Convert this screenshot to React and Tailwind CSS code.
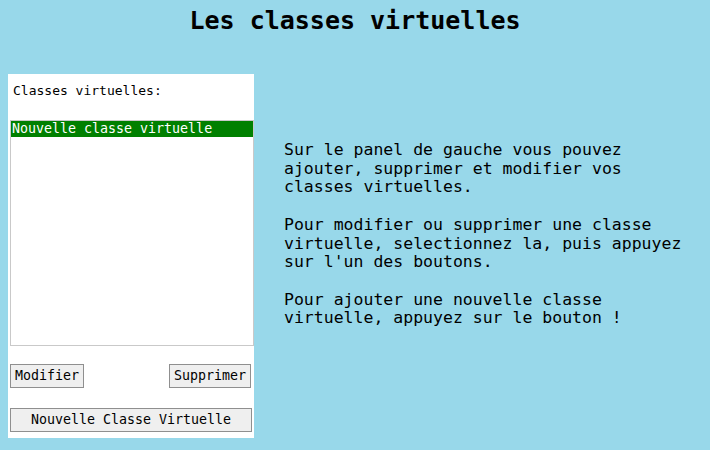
import React, { useState } from 'react';

const mono = { fontFamily: '"DejaVu Sans Mono", "Liberation Mono", monospace' };

export default function App() {
  const [selected, setSelected] = useState(0);
  const classes = ['Nouvelle classe virtuelle'];

  return (
    <div className="w-[710px] h-[450px] bg-[#98d8ea] text-black overflow-hidden" style={mono}>
      <h1 className="h-[44px] pt-[6px] text-center text-[25px] font-bold leading-[30px]">
        Les classes virtuelles
      </h1>

      <div className="flex mt-[30px]">
        <div className="ml-[8px] w-[246px] h-[364px] bg-white flex flex-col">
          <p className="pl-[5px] pt-[9px] text-[13px] leading-[16px]">Classes virtuelles:</p>

          <div className="ml-[2px] mt-[21px] w-[244px] h-[226px] border border-[#c9c9c9] bg-white">
            {classes.map((c, i) => (
              <div
                key={c}
                onClick={() => setSelected(i)}
                className={`h-[16px] pl-[1px] text-[13.3px] leading-[16px] ${
                  selected === i ? 'bg-[#008000] text-white' : ''
                }`}
              >
                {c}
              </div>
            ))}
          </div>

          <div className="flex justify-between pl-[2px] pr-[3px] mt-[18px]">
            <button className="w-[74px] h-[24px] border border-[#8f8f8f] bg-[#efefef] text-[13.3px] leading-[20px]">
              Modifier
            </button>
            <button className="w-[82px] h-[24px] border border-[#8f8f8f] bg-[#efefef] text-[13.3px] leading-[20px]">
              Supprimer
            </button>
          </div>

          <button className="ml-[2px] mt-[20px] w-[242px] h-[24px] border border-[#8f8f8f] bg-[#efefef] text-[13.3px] leading-[20px]">
            Nouvelle Classe Virtuelle
          </button>
        </div>

        <div className="ml-[30px] mt-[67px] text-[16.5px] leading-[18.7px]">
          <p>
            Sur le panel de gauche vous pouvez
            <br />
            ajouter, supprimer et modifier vos
            <br />
            classes virtuelles.
          </p>
          <p className="mt-[18.7px]">
            Pour modifier ou supprimer une classe
            <br />
            virtuelle, selectionnez la, puis appuyez
            <br />
            sur l'un des boutons.
          </p>
          <p className="mt-[18.7px]">
            Pour ajouter une nouvelle classe
            <br />
            virtuelle, appuyez sur le bouton !
          </p>
        </div>
      </div>
    </div>
  );
}
